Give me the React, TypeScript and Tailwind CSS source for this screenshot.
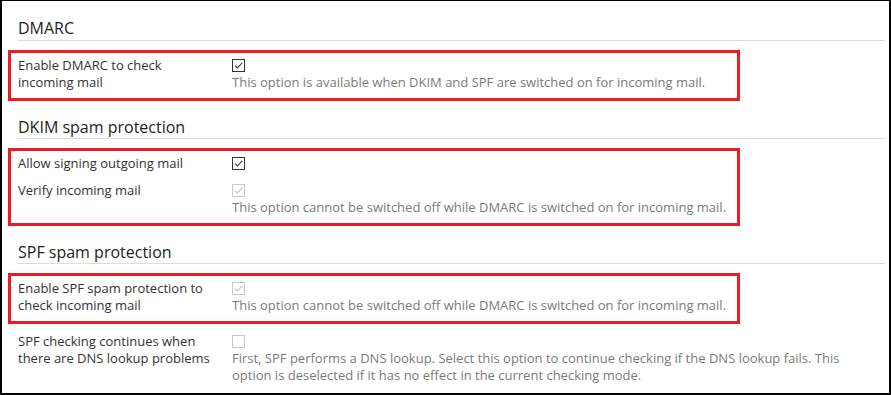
import type { ReactNode } from 'react';

type BoxState = 'checked' | 'checked-disabled' | 'disabled';

function Checkbox({ state }: { state: BoxState }) {
  const muted = state !== 'checked';
  return (
    <span
      className={`inline-flex w-[13px] h-[13px] bg-white border ${muted ? 'border-[#c8c8c8]' : 'border-[#333]'}`}
    >
      {state !== 'disabled' && (
        <svg viewBox="0 0 11 11" className="w-[11px] h-[11px]">
          <path
            d="M2 5.6 L4.4 8 L9.2 2.8"
            fill="none"
            stroke={muted ? '#c0c0c0' : '#333'}
            strokeWidth="1.1"
          />
        </svg>
      )}
    </span>
  );
}

function Row({ label, state, note }: { label: string; state: BoxState; note?: ReactNode }) {
  return (
    <div className="flex">
      <div className="w-[214px] pr-[18px] shrink-0 text-[#333]">{label}</div>
      <div className="flex-1 min-w-0">
        <div className="h-[17px] flex items-center">
          <Checkbox state={state} />
        </div>
        {note && <div className="text-[#7b7b7b]">{note}</div>}
      </div>
    </div>
  );
}

function Heading({ children, first }: { children: ReactNode; first?: boolean }) {
  return (
    <h2
      className={`${first ? 'pt-[16px] pb-[1px]' : 'mt-[15px]'} text-[16px] leading-[22px] text-[#1e1e1e] border-b border-[#dcdcdc] mb-[9px]`}
    >
      {children}
    </h2>
  );
}

function Marked({ children }: { children: ReactNode }) {
  return (
    <div className="-ml-[10px] w-[732px] border-[3px] border-[#ed1c24] pl-[7px] pt-[4px] pb-[7px] flex flex-col gap-[10px]">
      {children}
    </div>
  );
}

export default function App() {
  return (
    <div
      className="w-[891px] h-[395px] bg-white border-t border-x-2 border-b-2 border-black pl-[16px] pr-[4px] text-[13px] leading-[17px]"
      style={{ fontFamily: '"Open Sans", "Noto Sans", sans-serif' }}
    >
      <Heading first>DMARC</Heading>
      <Marked>
        <Row
          label="Enable DMARC to check incoming mail"
          state="checked"
          note="This option is available when DKIM and SPF are switched on for incoming mail."
        />
      </Marked>

      <Heading>DKIM spam protection</Heading>
      <Marked>
        <Row label="Allow signing outgoing mail" state="checked" />
        <Row
          label="Verify incoming mail"
          state="checked-disabled"
          note="This option cannot be switched off while DMARC is switched on for incoming mail."
        />
      </Marked>

      <Heading>SPF spam protection</Heading>
      <Marked>
        <Row
          label="Enable SPF spam protection to check incoming mail"
          state="checked-disabled"
          note="This option cannot be switched off while DMARC is switched on for incoming mail."
        />
      </Marked>
      <div className="pt-[9px]">
        <Row
          label="SPF checking continues when there are DNS lookup problems"
          state="disabled"
          note={
            <>
              First, SPF performs a DNS lookup. Select this option to continue checking if the DNS lookup fails. This
              <br />
              option is deselected if it has no effect in the current checking mode.
            </>
          }
        />
      </div>
    </div>
  );
}
